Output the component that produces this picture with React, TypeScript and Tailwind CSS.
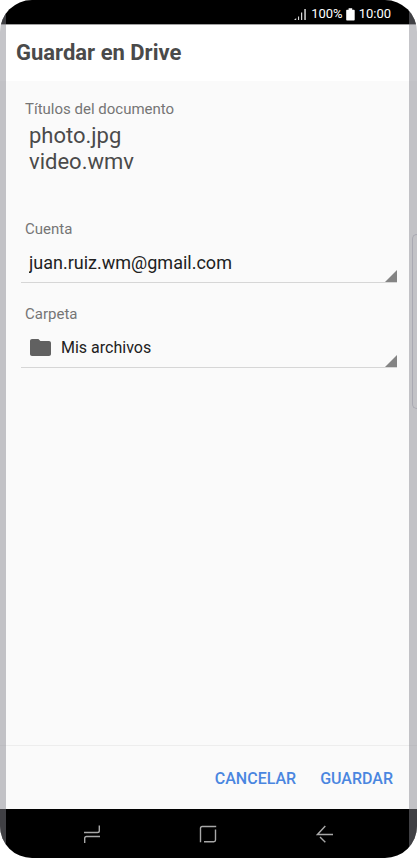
import type { ReactNode } from 'react'

type SpinnerProps = {
  id: string
  label: string
  options: string[]
  icon?: ReactNode
  selectClass: string
}

function SignalIcon() {
  return (
    <svg width="13" height="13" viewBox="0 0 13 13" fill="#d5d5d5" aria-hidden="true">
      <path d="M0 12 L2.200 10 V12 Z" />
      <rect x="4" y="8.5" width="1.1" height="3.5" />
      <rect x="7" y="4.5" width="1.2" height="7.5" />
      <rect x="10.3" y="1" width="1.5" height="11" />
    </svg>
  )
}

function BatteryIcon() {
  return (
    <svg width="9" height="13" viewBox="0 0 9 13" fill="#fff" aria-hidden="true">
      <path d="M2.600 0.300h3.600v1.400H8c.4 0 .7.3.7.7v9.300c0 .4-.3.7-.7.7H.9c-.4 0-.7-.3-.7-.7V2.400c0-.4.3-.7.7-.7h1.700z" />
    </svg>
  )
}

function FolderIcon() {
  return (
    <svg width="21" height="17" viewBox="0 0 21 17" fill="#616161" aria-hidden="true">
      <path d="M2 0h6.400l2 2H19c1.100 0 2 .9 2 2v11c0 1.100-.9 2-2 2H2c-1.100 0-2-.9-2-2V2C0 .9.9 0 2 0z" />
    </svg>
  )
}

/** Drop-down with the underline and corner triangle of an Android spinner. */
function Spinner({ id, label, options, icon, selectClass }: SpinnerProps) {
  return (
    <div>
      <label htmlFor={id} className="block pl-1 text-[15px] leading-5 text-[#757575]">
        {label}
      </label>
      <div className="mt-1 flex h-10 items-center border-b border-[#d6d6d6] pl-2">
        {icon && <span className="mr-[10px] ml-px">{icon}</span>}
        <select
          id={id}
          className={`h-full min-w-0 flex-1 appearance-none bg-transparent text-[#212121] outline-none ${selectClass}`}
        >
          {options.map((o) => (
            <option key={o}>{o}</option>
          ))}
        </select>
        <svg width="12" height="12" viewBox="0 0 12 12" className="self-end" aria-hidden="true">
          <path d="M12 0v12H0z" fill="#848484" />
        </svg>
      </div>
    </div>
  )
}

function NavBar() {
  return (
    <nav className="flex h-[49px] items-center justify-around bg-black px-[34px] text-[#a8a8a8]">
      <button type="button" aria-label="Recientes">
        <svg width="18" height="20" viewBox="0 0 18 20" fill="none" stroke="currentColor" strokeWidth="1.4">
          <path d="M1 8.500H14.500Q16.300 8.500 16.300 6.700V1.500" />
          <path d="M17 12.500H3.500Q1.700 12.500 1.700 14.300V19" />
        </svg>
      </button>
      <button type="button" aria-label="Inicio">
        <svg width="18" height="18" viewBox="0 0 18 18" fill="none" stroke="currentColor" strokeWidth="1.4">
          <path d="M1.500 17.200V3.200Q1.500 1.500 3.200 1.500H17.200" />
          <path d="M16.500 4.500V15Q16.500 16.700 14.800 16.700H5" />
        </svg>
      </button>
      <button type="button" aria-label="Atrás">
        <svg width="18" height="18" viewBox="0 0 18 18" fill="none" stroke="currentColor" strokeWidth="1.4">
          <path d="M9.300 1L1.500 9.500H17" />
          <path d="M4 12L9.300 17.300" />
        </svg>
      </button>
    </nav>
  )
}

export default function App() {
  return (
    <div className="min-h-screen bg-white font-['Roboto',sans-serif]">
      <div className="relative flex min-h-screen flex-col overflow-hidden rounded-[32px] bg-[#fafafa]">
        <div className="flex h-6 items-center justify-end bg-black pt-1 pr-[26px] text-[13px] leading-5 text-white">
          <SignalIcon />
          <span className="ml-1">100%</span>
          <span className="mr-1 ml-[3px]">
            <BatteryIcon />
          </span>
          <span>10:00</span>
        </div>

        <header className="flex h-[57px] items-center border-t border-[#a0a0a0] bg-white px-4">
          <h1 className="text-[22px] leading-8 font-bold text-[#4a4a4a]">Guardar en Drive</h1>
        </header>

        <form className="flex flex-1 flex-col" onSubmit={(e) => e.preventDefault()}>
          <div className="flex-1 pt-[18px] pr-5 pl-[21px]">
            <label htmlFor="titles" className="block pl-1 text-[15px] leading-5 text-[#757575]">
              Títulos del documento
            </label>
            <textarea
              id="titles"
              rows={2}
              defaultValue={'photo.jpg\nvideo.wmv'}
              className="mt-1 mb-11 block w-full resize-none bg-transparent pl-2 text-[22px] leading-[26px] text-[#4a4a4a] outline-none"
            />
            <div className="flex flex-col gap-[21px]">
              <Spinner id="account" label="Cuenta" options={['juan.ruiz.wm@gmail.com']} selectClass="text-lg" />
              <Spinner
                id="folder"
                label="Carpeta"
                options={['Mis archivos']}
                icon={<FolderIcon />}
                selectClass="text-base"
              />
            </div>
          </div>

          <div className="flex h-16 items-center justify-end gap-6 border-t border-[#ededed] pt-[2px] pr-6 text-base font-medium text-[#4a86e0]">
            <button type="button">CANCELAR</button>
            <button type="submit">GUARDAR</button>
          </div>
        </form>

        <NavBar />

        {/* curved glass edges, tinting whatever is below them */}
        <div className="pointer-events-none absolute inset-y-0 left-0 w-[6px] bg-[#85858f]/48" />
        <div className="pointer-events-none absolute inset-y-0 right-0 w-2 bg-[#85858f]/48">
          <div className="absolute top-[234px] right-0 h-[175px] w-[5px] rounded-l-md border border-r-0 border-[#a9a9b2]" />
        </div>
      </div>
    </div>
  )
}
